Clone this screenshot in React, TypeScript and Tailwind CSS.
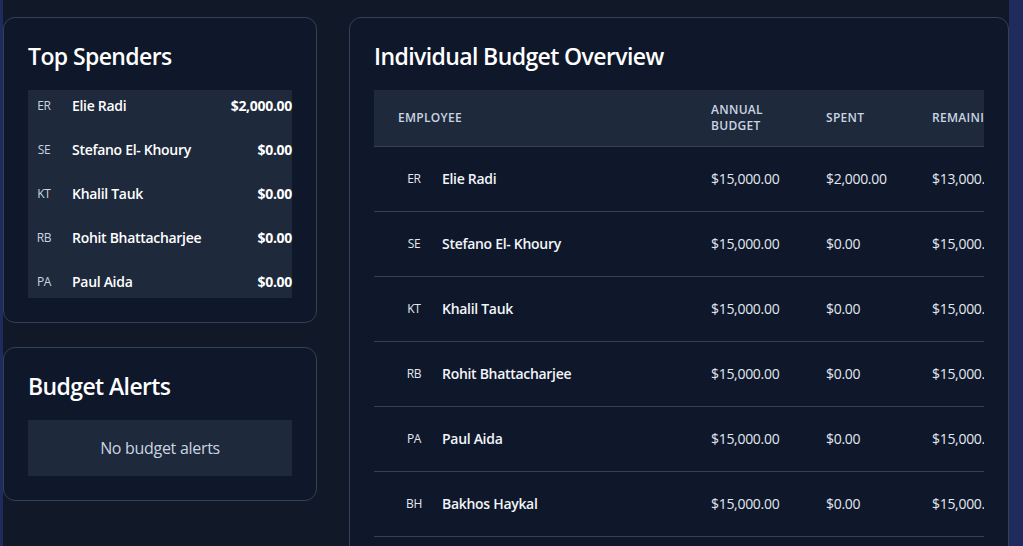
import React from "react";

const SPENDERS = [
  { initials: "ER", name: "Elie Radi", amount: "$2,000.00" },
  { initials: "SE", name: "Stefano El- Khoury", amount: "$0.00" },
  { initials: "KT", name: "Khalil Tauk", amount: "$0.00" },
  { initials: "RB", name: "Rohit Bhattacharjee", amount: "$0.00" },
  { initials: "PA", name: "Paul Aida", amount: "$0.00" },
];

const BUDGETS = [
  { initials: "ER", name: "Elie Radi", annual: "$15,000.00", spent: "$2,000.00", remaining: "$13,000.00" },
  { initials: "SE", name: "Stefano El- Khoury", annual: "$15,000.00", spent: "$0.00", remaining: "$15,000.00" },
  { initials: "KT", name: "Khalil Tauk", annual: "$15,000.00", spent: "$0.00", remaining: "$15,000.00" },
  { initials: "RB", name: "Rohit Bhattacharjee", annual: "$15,000.00", spent: "$0.00", remaining: "$15,000.00" },
  { initials: "PA", name: "Paul Aida", annual: "$15,000.00", spent: "$0.00", remaining: "$15,000.00" },
  { initials: "BH", name: "Bakhos Haykal", annual: "$15,000.00", spent: "$0.00", remaining: "$15,000.00" },
  { initials: "GM", name: "Georges Mansour", annual: "$15,000.00", spent: "$0.00", remaining: "$15,000.00" },
];

export default function App() {
  return (
    <div className="h-[546px] w-full overflow-hidden bg-[#111827] flex font-['Open_Sans','Noto_Sans',sans-serif] text-white">
      {/* sidebar edge */}
      <div className="w-[3px] shrink-0 bg-[#1e2b5c]" />

      <div className="flex-1 flex gap-8 pt-[17px]">
        {/* left column */}
        <div className="w-[314px] shrink-0 flex flex-col gap-6">
          <div className="bg-[#0f172a] border border-[#334155] rounded-xl p-6">
            <h2 className="text-[23px] leading-7 font-semibold mb-5 tracking-[-0.6px]">Top Spenders</h2>
            <div className="bg-[#1e293b] space-y-3">
              {SPENDERS.map((s) => (
                <div key={s.initials} className="h-8 flex items-center tracking-[-0.3px]">
                  <div className="w-8 h-8 flex items-center justify-center text-xs text-slate-300">{s.initials}</div>
                  <span className="ml-3 text-sm font-semibold text-white">{s.name}</span>
                  <span className="ml-auto text-sm font-bold text-white">{s.amount}</span>
                </div>
              ))}
            </div>
          </div>

          <div className="bg-[#0f172a] border border-[#334155] rounded-xl p-6">
            <h2 className="text-[23px] leading-7 font-semibold mb-5 tracking-[-0.6px]">Budget Alerts</h2>
            <div className="bg-[#1e293b] py-4 text-center text-base leading-6 text-slate-300 tracking-[-0.3px]">No budget alerts</div>
          </div>
        </div>

        {/* right card */}
        <div className="w-[660px] shrink-0 bg-[#0f172a] border border-[#334155] rounded-xl p-6 self-start">
          <h2 className="text-[23px] leading-7 font-semibold mb-5 tracking-[-0.6px]">Individual Budget Overview</h2>
          <div className="overflow-hidden">
            <table className="table-fixed w-[860px] border-collapse tracking-[-0.3px]">
              <colgroup>
                <col className="w-[313px]" />
                <col className="w-[115px]" />
                <col className="w-[106px]" />
                <col className="w-[140px]" />
                <col className="w-[186px]" />
              </colgroup>
              <thead className="bg-[#1e293b]">
                <tr className="border-b border-[#334155]">
                  <th className="px-6 py-3 text-left text-xs leading-4 font-semibold uppercase tracking-wide text-slate-300">Employee</th>
                  <th className="px-6 py-3 text-left text-xs leading-4 font-semibold uppercase tracking-wide text-slate-300">Annual Budget</th>
                  <th className="px-6 py-3 text-left text-xs leading-4 font-semibold uppercase tracking-wide text-slate-300">Spent</th>
                  <th className="px-6 py-3 text-left text-xs leading-4 font-semibold uppercase tracking-wide text-slate-300">Remaining</th>
                  <th className="px-6 py-3 text-left text-xs leading-4 font-semibold uppercase tracking-wide text-slate-300">Status</th>
                </tr>
              </thead>
              <tbody>
                {BUDGETS.map((b) => (
                  <tr key={b.initials} className="border-b border-[#334155]">
                    <td className="px-6 py-4">
                      <div className="flex items-center">
                        <div className="w-8 h-8 flex items-center justify-center text-xs text-slate-200">{b.initials}</div>
                        <span className="ml-3 text-sm font-semibold text-slate-100">{b.name}</span>
                      </div>
                    </td>
                    <td className="px-6 py-4 text-sm text-slate-200 whitespace-nowrap">{b.annual}</td>
                    <td className="px-6 py-4 text-sm text-slate-200 whitespace-nowrap">{b.spent}</td>
                    <td className="px-6 py-4 text-sm text-slate-200 whitespace-nowrap">{b.remaining}</td>
                    <td className="px-6 py-4 text-sm text-slate-200 whitespace-nowrap">On track</td>
                  </tr>
                ))}
              </tbody>
            </table>
          </div>
        </div>
      </div>

      {/* right edge */}
      <div className="w-[14px] shrink-0 bg-[#1e2b5c]" />
    </div>
  );
}
